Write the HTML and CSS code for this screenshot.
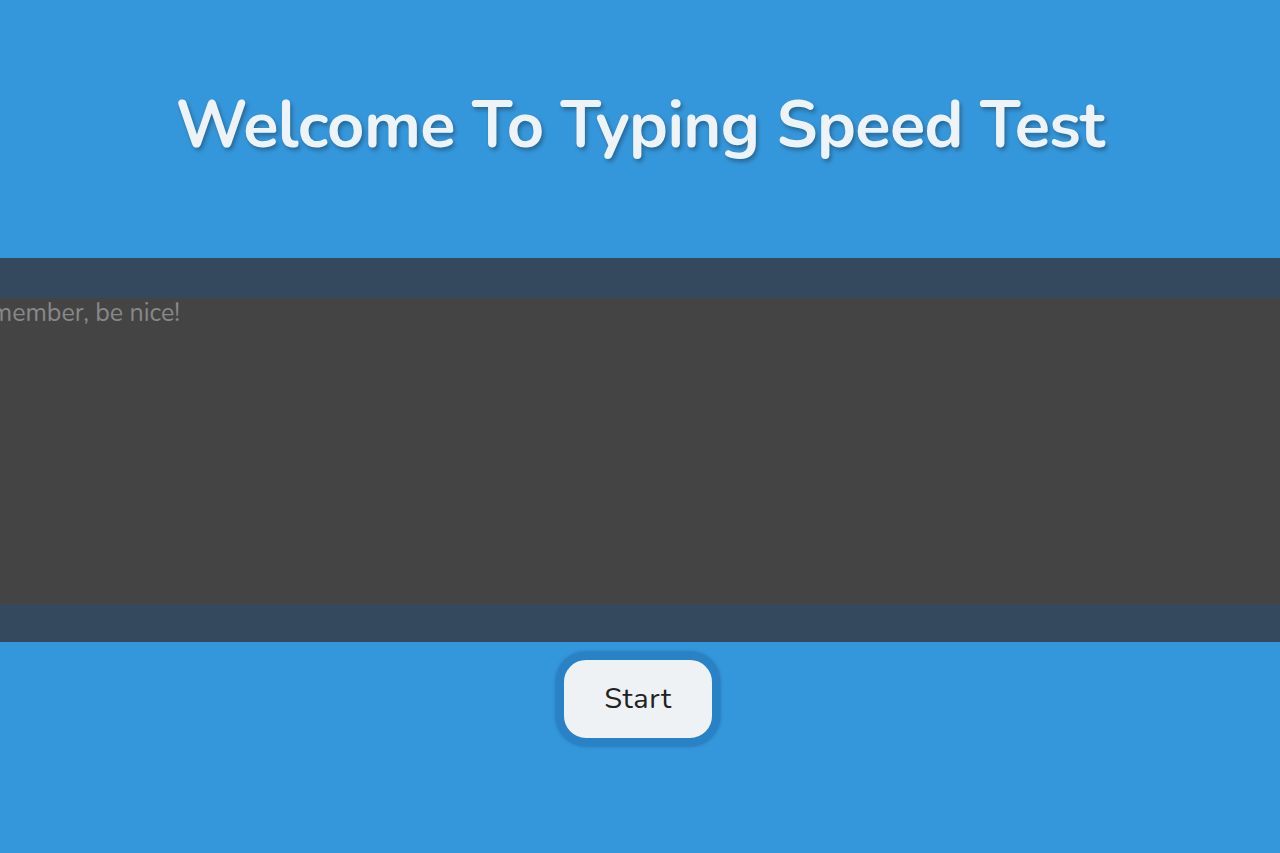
FILE: index.html
```html
<!DOCTYPE html>
<html lang="en">
<head>
<meta charset="utf-8">
<title>Typing Speed Test</title>
<link rel="stylesheet" href="styles.css">
</head>
<body>
  <header class="header">
    <h1 class="title">Welcome To Typing Speed Test</h1>
  </header>
  <section class="band">
    <div class="area-wrap">
      <textarea class="area" placeholder="Remember, be nice!"></textarea>
    </div>
  </section>
  <div class="actions">
    <button class="start-btn" type="button">Start</button>
  </div>
</body>
</html>
```

FILE: styles.css
```css
html, body {
  margin: 0;
  padding: 0;
}
body {
  background: #3597db;
  font-family: "Nunito", "Lato", "Noto Sans", sans-serif;
  min-height: 853px;
  overflow: hidden;
}
.header {
  height: 258px;
  display: flex;
  align-items: center;
  justify-content: center;
}
.title {
  margin: 0;
  color: #eef3f8;
  font-size: 65px;
  font-weight: 700;
  letter-spacing: -0.6px;
  text-shadow: 2px 3px 4px rgba(0, 0, 0, 0.3);
  padding-bottom: 8px;
}
.band {
  background: #34495e;
  padding: 40px 0 38px;
  overflow: hidden;
}
.area-wrap {
  display: flex;
  justify-content: center;
}
.area {
  display: block;
  flex: none;
  width: 1380px;
  height: 306px;
  margin: 0;
  border: none;
  outline: none;
  resize: none;
  background: #444444;
  color: #ddd;
  font-family: "Nunito", "Lato", "Noto Sans", sans-serif;
  font-size: 25px;
  padding: 0 0 0 11px;
  box-sizing: border-box;
  line-height: 30px;
}
.area::placeholder {
  color: #888888;
}
.actions {
  display: flex;
  justify-content: center;
  padding-top: 10px;
}
.start-btn {
  width: 164px;
  height: 94px;
  margin-right: 4px;
  border: 8px solid #2a82c6;
  border-radius: 30px;
  background: #eef2f4;
  color: #222;
  font-family: "Nunito", "Lato", "Noto Sans", sans-serif;
  font-size: 29px;
  letter-spacing: 0.6px;
  box-shadow: 0 0 3px 1px rgba(30, 100, 160, 0.5);
  padding: 0 0 2px;
  cursor: pointer;
}
```
